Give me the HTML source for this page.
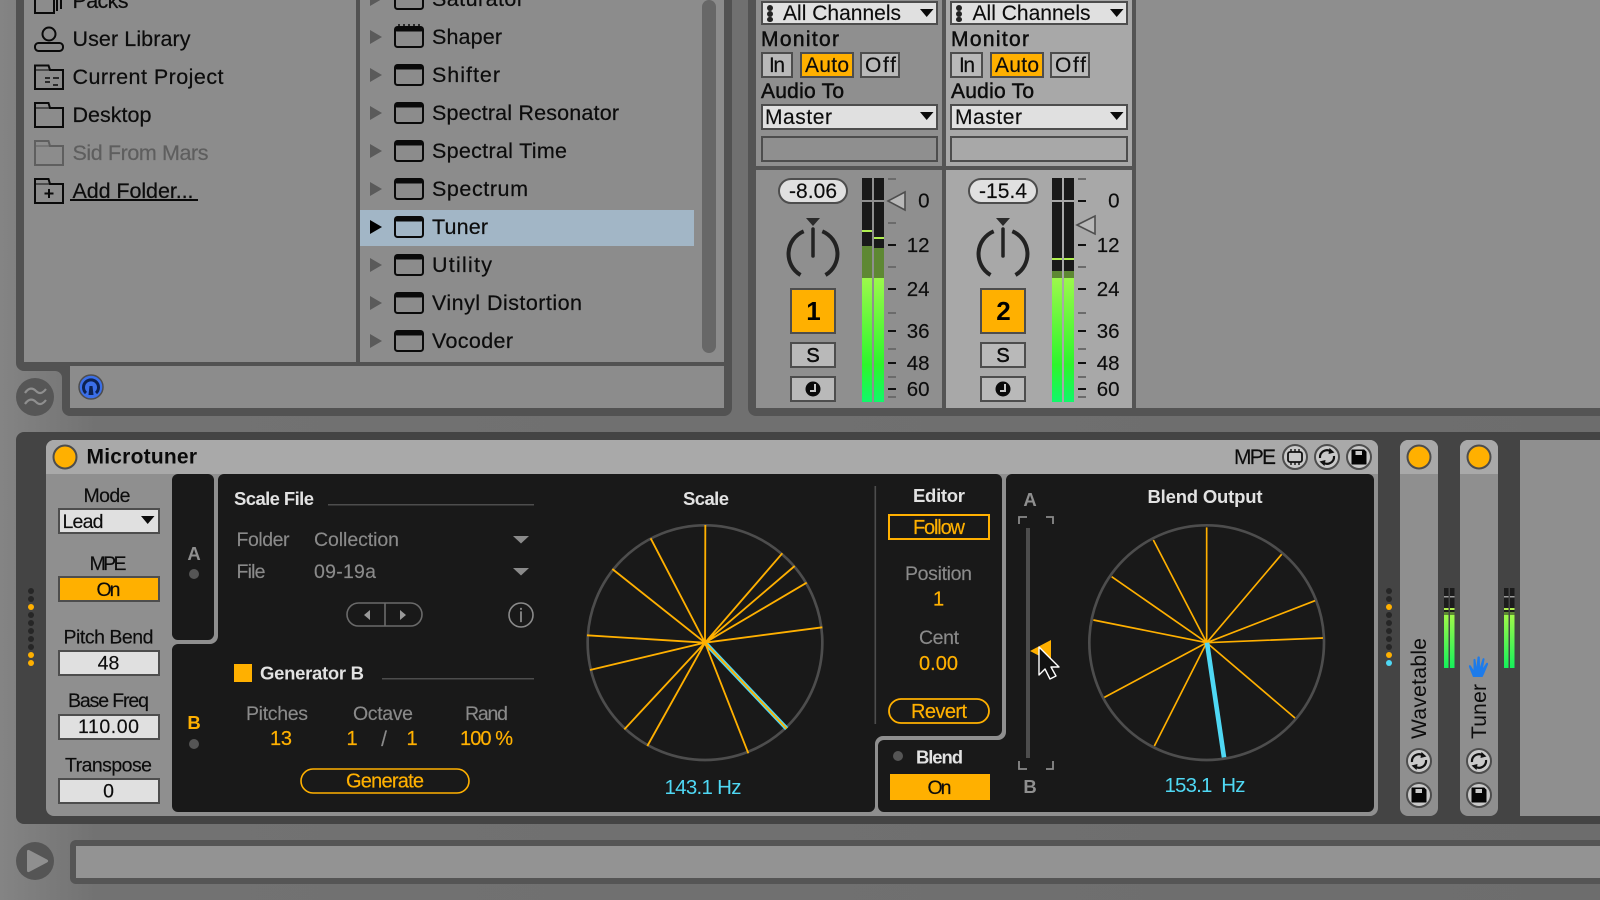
<!DOCTYPE html>
<html><head><meta charset="utf-8">
<style>
html,body{margin:0;padding:0;background:#6f6f6f;overflow:hidden}
svg{display:block;font-family:"Liberation Sans",sans-serif}
.b{font-size:21.5px;fill:#0c0c0c;stroke:#0c0c0c;stroke-width:.2px}
.m{font-size:21px;fill:#0c0c0c;stroke:#0c0c0c;stroke-width:.45px}
.n{font-size:21px;fill:#0c0c0c;stroke:#0c0c0c;stroke-width:.15px}
.s{font-size:19.5px;fill:#0c0c0c;stroke:#0c0c0c;stroke-width:.15px}
.g{font-size:19.5px;fill:#8a8a8a;stroke:#8a8a8a;stroke-width:.15px}
.o{font-size:20px;fill:#ffb000;stroke:#ffb000;stroke-width:.2px}
.t{font-size:18.5px;fill:#e2e2e2;font-weight:bold}
.c{font-size:20.5px;fill:#4fd8f4}
.mid{text-anchor:middle}
</style></head><body>
<svg width="1600" height="900" viewBox="0 0 1600 900" xmlns="http://www.w3.org/2000/svg">
<defs>
<linearGradient id="bg" x1="0" x2="1" y1="0" y2="0"><stop offset="0" stop-color="#848484"/><stop offset=".06" stop-color="#727272"/><stop offset="1" stop-color="#6d6d6d"/></linearGradient>
<linearGradient id="gm" x1="0" x2="0" y1="0" y2="1"><stop offset="0" stop-color="#9cf84c"/><stop offset=".7" stop-color="#2df52c"/><stop offset="1" stop-color="#12f76a"/></linearGradient>
<linearGradient id="gs" x1="0" x2="0" y1="0" y2="1"><stop offset="0" stop-color="#a0f84a"/><stop offset="1" stop-color="#14f05a"/></linearGradient>
<g id="dev"><rect x="-14" y="-10" width="28" height="20" rx="2.5" fill="none" stroke="#0a0a0a" stroke-width="2"/><rect x="-14" y="-10" width="28" height="4.5" rx="2" fill="#0a0a0a"/></g>
<g id="knob"><path d="M806 218H820L813 226Z" fill="#2a2a2a"/><path d="M800.5 275A24.5 24.5 0 0 1 803.7 231.3M822.3 231.3A24.5 24.5 0 0 1 825.5 275" fill="none" stroke="#222" stroke-width="4"/><path d="M813 229V256" stroke="#222" stroke-width="3.5" stroke-linecap="round"/></g>
<g id="sv"><circle r="12" fill="#c9c9c9" stroke="#4d4d4d" stroke-width="2"/><path d="M-7 -7H5L7 -5V7H-7Z" fill="#050505" stroke="#050505" stroke-linejoin="round"/><rect x="-3.5" y="-6" width="6.500" height="4" fill="#c9c9c9"/></g>
<g id="rf"><circle r="12" fill="#c9c9c9" stroke="#4d4d4d" stroke-width="2"/><path d="M-7 1A7 7 0 0 1 4 -5.500M7 -1A7 7 0 0 1 -4 5.500" fill="none" stroke="#111" stroke-width="2.2"/><path d="M2.500 -9L7.500 -4.500L1.500 -3ZM-2.500 9L-7.500 4.500L-1.500 3Z" fill="#111"/></g>
<g id="led"><circle r="11.500" fill="#ffb000" stroke="#4d4d4d" stroke-width="2"/></g>
<path id="tri" d="M0 0L12 7L0 14Z"/>
<g id="ar"><path d="M0 0H13.500L6.700 8Z" fill="#0a0a0a"/></g>
</defs>

<rect width="1600" height="900" fill="url(#bg)"/>

<!-- browser frame -->
<path d="M16 0H732V408a8 8 0 0 1-8 8H70a8 8 0 0 1-8-8V378a7 7 0 0 0-7-7H24a8 8 0 0 1-8-8Z" fill="#525252"/>
<rect x="24" y="0" width="332" height="362" fill="#8c8c8c"/>
<rect x="360" y="0" width="364" height="362" fill="#8c8c8c"/>
<rect x="702" y="0" width="14" height="353" rx="7" fill="#676767"/>
<rect x="70" y="366" width="654" height="42" fill="#8c8c8c"/>
<rect x="360" y="210" width="334" height="36" fill="#a2b6c6"/>

<!-- left sidebar icons -->
<g fill="none" stroke="#0a0a0a" stroke-width="2">
<path d="M35 -6V13H54V-6M57 -6V11M61 -6V9"/>
<circle cx="49" cy="34" r="6.500"/><rect x="35" y="43" width="28" height="8" rx="3.500"/>
<path d="M35 89V65.500H48.500L50 70H63V89Z"/><path d="M35 70H50" stroke-width="1"/>
<path d="M45 78H50M45 82H50M53 78H59M53 85H58" stroke-width="1.600"/>
<path d="M35 127V103H48.500L50 108H63V127Z"/><path d="M35 108H50" stroke-width="1"/>
<g stroke="#5f5f5f"><path d="M35 165V141H48.500L50 146H63V165Z"/><path d="M35 146H50" stroke-width="1"/></g>
<path d="M35 203V179H48.500L50 184H63V203Z"/><path d="M35 184H50" stroke-width="1"/>
<path d="M49 189V198M44.500 193.500H53.500"/>
</g>
<text x="72.500" y="8" class="b" textLength="56">Packs</text>
<text x="72.500" y="46" class="b" textLength="118">User Library</text>
<text x="72.500" y="84" class="b" textLength="151">Current Project</text>
<text x="72.500" y="122" class="b" textLength="79">Desktop</text>
<text x="72.500" y="160" class="b" textLength="136" style="fill:#5e5e5e;stroke:#5e5e5e">Sid From Mars</text>
<text x="72.500" y="198" class="b" textLength="121">Add Folder...</text>
<rect x="70" y="199" width="128" height="2" fill="#0a0a0a"/>

<!-- device list -->
<g fill="#5a5a5a">
<use href="#tri" x="370" y="-8"/><use href="#tri" x="370" y="30"/><use href="#tri" x="370" y="68"/><use href="#tri" x="370" y="106"/><use href="#tri" x="370" y="144"/><use href="#tri" x="370" y="182"/><use href="#tri" x="370" y="258"/><use href="#tri" x="370" y="296"/><use href="#tri" x="370" y="334"/>
</g>
<use href="#tri" x="370" y="220" fill="#000"/>
<use href="#dev" x="409" y="-1"/><use href="#dev" x="409" y="37"/><use href="#dev" x="409" y="75"/><use href="#dev" x="409" y="113"/><use href="#dev" x="409" y="151"/><use href="#dev" x="409" y="189"/><use href="#dev" x="409" y="227"/><use href="#dev" x="409" y="265"/><use href="#dev" x="409" y="303"/><use href="#dev" x="409" y="341"/>
<path d="M399 24V29M404 24V29M409 24V29M414 24V29M419 24V29" stroke="#0a0a0a" stroke-width="1.500"/>
<text x="432" y="6" class="b" textLength="92">Saturator</text>
<text x="432" y="44" class="b" textLength="70">Shaper</text>
<text x="432" y="82" class="b" textLength="68">Shifter</text>
<text x="432" y="120" class="b" textLength="187">Spectral Resonator</text>
<text x="432" y="158" class="b" textLength="135">Spectral Time</text>
<text x="432" y="196" class="b" textLength="96">Spectrum</text>
<text x="432" y="234" class="b" textLength="56">Tuner</text>
<text x="432" y="272" class="b" textLength="60">Utility</text>
<text x="432" y="310" class="b" textLength="150">Vinyl Distortion</text>
<text x="432" y="348" class="b" textLength="81">Vocoder</text>

<!-- browser bottom chips -->
<circle cx="35" cy="397" r="19" fill="#565656"/>
<path d="M25 393C29 387 33 388 36 391S42 394 46 389M25 404C29 398 33 399 36 402S42 405 46 400" fill="none" stroke="#8f8f8f" stroke-width="2.200"/>
<circle cx="91" cy="387" r="12" fill="#3b6fe8" stroke="#4d4d4d" stroke-width="1.500"/>
<path d="M86 393A7.500 7.500 0 1 1 96 393" fill="none" stroke="#0d2250" stroke-width="3"/><path d="M89.500 386H92.500L93.500 395H88.500Z" fill="#0d2250"/>

<!-- mixer -->
<path d="M748 0H1600V416H756a8 8 0 0 1-8-8Z" fill="#545454"/>
<rect x="1136" y="0" width="464" height="408" fill="#8e8e8e"/>
<rect x="756" y="0" width="186" height="166" fill="#8f8f8f"/><rect x="756" y="170" width="186" height="238" fill="#8f8f8f"/>
<rect x="946" y="0" width="186" height="166" fill="#a8a8a8"/><rect x="946" y="170" width="186" height="238" fill="#a8a8a8"/>

<g stroke="#4d4d4d" stroke-width="2">
<rect x="762" y="2" width="175" height="22" fill="#e0e0e0"/><rect x="951" y="2" width="176" height="22" fill="#e0e0e0"/>
<rect x="762" y="53" width="30" height="24" fill="#b9b9b9"/><rect x="801" y="53" width="52" height="24" fill="#ffb000"/><rect x="861" y="53" width="38" height="24" fill="#b9b9b9"/>
<rect x="951" y="53" width="31" height="24" fill="#b9b9b9"/><rect x="991" y="53" width="52" height="24" fill="#ffb000"/><rect x="1051" y="53" width="38" height="24" fill="#b9b9b9"/>
<rect x="762" y="105" width="175" height="24" fill="#e0e0e0"/><rect x="951" y="105" width="176" height="24" fill="#e0e0e0"/>
<rect x="762" y="137" width="175" height="24" fill="#8f8f8f"/><rect x="951" y="137" width="176" height="24" fill="#a8a8a8"/>
<rect x="779" y="179" width="68" height="24" rx="12" fill="#e0e0e0"/><rect x="969" y="179" width="68" height="24" rx="12" fill="#e0e0e0"/>
<rect x="791" y="289" width="44" height="44" fill="#ffb000"/><rect x="981" y="289" width="44" height="44" fill="#ffb000"/>
<rect x="791" y="343" width="44" height="24" fill="#b9b9b9"/><rect x="981" y="343" width="44" height="24" fill="#b9b9b9"/>
<rect x="791" y="377" width="44" height="24" fill="#b9b9b9"/><rect x="981" y="377" width="44" height="24" fill="#b9b9b9"/>
</g>
<g fill="#222"><rect x="767" y="5" width="6" height="6" rx="3"/><rect x="767" y="11" width="6" height="6" rx="3"/><rect x="767" y="17" width="6" height="5" rx="2.500"/>
<rect x="956" y="5" width="6" height="6" rx="3"/><rect x="956" y="11" width="6" height="6" rx="3"/><rect x="956" y="17" width="6" height="5" rx="2.500"/></g>
<use href="#ar" x="920" y="9"/><use href="#ar" x="1110" y="9"/><use href="#ar" x="920" y="112"/><use href="#ar" x="1110" y="112"/>
<text x="783" y="20" class="n" textLength="118">All Channels</text><text x="972.500" y="20" class="n" textLength="118">All Channels</text>
<text x="761" y="46" class="m" textLength="78">Monitor</text><text x="951" y="46" class="m" textLength="78">Monitor</text>
<text x="769" y="72" class="n" textLength="16">In</text><text x="805" y="72" class="n" textLength="44">Auto</text><text x="865" y="72" class="n" textLength="31">Off</text>
<text x="959" y="72" class="n" textLength="16">In</text><text x="995" y="72" class="n" textLength="44">Auto</text><text x="1055" y="72" class="n" textLength="31">Off</text>
<text x="761" y="98" class="m" textLength="83">Audio To</text><text x="951" y="98" class="m" textLength="83">Audio To</text>
<text x="765" y="124" class="n" textLength="67">Master</text><text x="955" y="124" class="n" textLength="67">Master</text>
<text x="789" y="198" class="n" textLength="48">-8.06</text><text x="979" y="198" class="n" textLength="48">-15.4</text>

<use href="#knob"/><use href="#knob" x="190"/>
<text x="813.500" y="320" class="mid" font-size="26" font-weight="bold">1</text><text x="1003.500" y="320" class="mid" font-size="26" font-weight="bold">2</text>
<text x="813" y="362" class="s mid" style="stroke-width:.5px;font-size:20px">S</text><text x="1003" y="362" class="s mid" style="stroke-width:.5px;font-size:20px">S</text>
<circle cx="813" cy="389" r="7.500" fill="#0a0a0a"/><path d="M815 384V391H810" stroke="#c9c9c9" stroke-width="2" fill="none"/>
<circle cx="1003" cy="389" r="7.500" fill="#0a0a0a"/><path d="M1005 384V391H1000" stroke="#c9c9c9" stroke-width="2" fill="none"/>

<!-- meters -->
<g fill="#191919"><rect x="862" y="178" width="10" height="224"/><rect x="874" y="178" width="10" height="224"/><rect x="1052" y="178" width="10" height="224"/><rect x="1064" y="178" width="10" height="224"/></g>
<g fill="#8f8f8f"><rect x="862" y="200" width="22" height="2"/><rect x="872" y="178" width="2" height="224"/></g>
<g fill="#a8a8a8"><rect x="1052" y="200" width="22" height="2"/><rect x="1062" y="178" width="2" height="224"/></g>
<rect x="862" y="246" width="10" height="32" fill="#5e8833"/><rect x="874" y="248" width="10" height="30" fill="#5e8833"/>
<rect x="1052" y="271" width="10" height="7" fill="#5e8833"/><rect x="1064" y="271" width="10" height="7" fill="#5e8833"/>
<g fill="url(#gm)"><rect x="862" y="278" width="10" height="124"/><rect x="874" y="278" width="10" height="124"/><rect x="1052" y="278" width="10" height="124"/><rect x="1064" y="278" width="10" height="124"/></g>
<g fill="#b0f050"><rect x="862" y="230" width="10" height="2"/><rect x="874" y="237" width="10" height="2"/><rect x="1052" y="258" width="10" height="2"/><rect x="1064" y="258" width="10" height="2"/></g>
<g fill="#6b6b6b"><rect x="888" y="178" width="8" height="2"/><rect x="888" y="222" width="8" height="2"/><rect x="888" y="266" width="8" height="2"/><rect x="888" y="312" width="8" height="2"/><rect x="888" y="348" width="8" height="2"/><rect x="888" y="376" width="8" height="2"/><rect x="888" y="396" width="8" height="2"/>
<rect x="1078" y="178" width="8" height="2"/><rect x="1078" y="266" width="8" height="2"/><rect x="1078" y="312" width="8" height="2"/><rect x="1078" y="348" width="8" height="2"/><rect x="1078" y="376" width="8" height="2"/><rect x="1078" y="396" width="8" height="2"/></g>
<g fill="#111"><rect x="888" y="244" width="8" height="2"/><rect x="888" y="288" width="8" height="2"/><rect x="888" y="330" width="8" height="2"/><rect x="888" y="362" width="8" height="2"/><rect x="888" y="388" width="8" height="2"/>
<rect x="1078" y="200" width="8" height="2"/><rect x="1078" y="244" width="8" height="2"/><rect x="1078" y="288" width="8" height="2"/><rect x="1078" y="330" width="8" height="2"/><rect x="1078" y="362" width="8" height="2"/><rect x="1078" y="388" width="8" height="2"/></g>
<path d="M888 201L905 192V210Z" fill="#b8b8b8" stroke="#4d4d4d" stroke-width="1.600"/>
<path d="M1077 225L1095 216V234Z" fill="#b8b8b8" stroke="#4d4d4d" stroke-width="1.600"/>
<g text-anchor="end" font-size="20.500" fill="#0c0c0c" stroke="#0c0c0c" stroke-width=".15">
<text x="929.500" y="207.500">0</text><text x="929.500" y="252">12</text><text x="929.500" y="296">24</text><text x="929.500" y="338">36</text><text x="929.500" y="370">48</text><text x="929.500" y="396">60</text>
<text x="1119.500" y="207.500">0</text><text x="1119.500" y="252">12</text><text x="1119.500" y="296">24</text><text x="1119.500" y="338">36</text><text x="1119.500" y="370">48</text><text x="1119.500" y="396">60</text>
</g>

<!-- device rack -->
<path d="M24 432H1600V824H24a8 8 0 0 1-8-8V440a8 8 0 0 1 8-8Z" fill="#444"/>
<rect x="46" y="440" width="1332" height="376" rx="8" fill="#8f8f8f"/>
<path d="M46 474V448a8 8 0 0 1 8-8H1370a8 8 0 0 1 8 8V474Z" fill="#a9a9a9"/>
<use href="#led" x="65" y="457"/>
<text x="86.500" y="463.500" textLength="110.500" font-size="21" font-weight="bold" fill="#0a0a0a">Microtuner</text>
<text x="1234" y="464" class="n" textLength="42">MPE</text>
<g transform="translate(1295 457)"><circle r="12" fill="#c9c9c9" stroke="#4d4d4d" stroke-width="2"/><rect x="-7" y="-5" width="14" height="10" rx="2" fill="none" stroke="#111" stroke-width="1.800"/><path d="M-4 -8V-5M0 -8V-5M4 -8V-5M-4 5V8M0 5V8M4 5V8" stroke="#111" stroke-width="1.400"/></g>
<use href="#rf" x="1327" y="457"/>
<use href="#sv" x="1359" y="457"/>

<!-- left controls -->
<g stroke="#4d4d4d" stroke-width="2">
<rect x="59" y="509" width="100" height="24" fill="#e0e0e0"/>
<rect x="59" y="577" width="100" height="24" fill="#ffb000"/>
<rect x="59" y="651" width="100" height="24" fill="#e0e0e0"/>
<rect x="59" y="715" width="100" height="24" fill="#e0e0e0"/>
<rect x="59" y="779" width="100" height="24" fill="#e0e0e0"/>
</g>
<use href="#ar" x="141" y="516"/>
<text x="83.500" y="502" class="s" textLength="47">Mode</text>
<text x="62.500" y="528" class="s" textLength="41">Lead</text>
<text x="89.500" y="570" class="s" textLength="37">MPE</text>
<text x="96.500" y="596" class="s" textLength="24">On</text>
<text x="63.500" y="643.500" class="s" textLength="90">Pitch Bend</text>
<text x="108.500" y="669.500" class="s mid">48</text>
<text x="68" y="707" class="s" textLength="81">Base Freq</text>
<text x="78" y="733" class="s" textLength="61">110.00</text>
<text x="65" y="771.500" class="s" textLength="87">Transpose</text>
<text x="108.500" y="797.500" class="s mid">0</text>
<!-- dots -->
<g fill="#262626"><circle cx="31" cy="591" r="3"/><circle cx="31" cy="599" r="3"/><circle cx="31" cy="615" r="3"/><circle cx="31" cy="623" r="3"/><circle cx="31" cy="631" r="3"/><circle cx="31" cy="639" r="3"/><circle cx="31" cy="647" r="3"/>
<circle cx="1389" cy="591" r="3"/><circle cx="1389" cy="599" r="3"/><circle cx="1389" cy="615" r="3"/><circle cx="1389" cy="623" r="3"/><circle cx="1389" cy="631" r="3"/><circle cx="1389" cy="639" r="3"/><circle cx="1389" cy="647" r="3"/></g>
<g fill="#ffb000"><circle cx="31" cy="607" r="3"/><circle cx="31" cy="655" r="3"/><circle cx="31" cy="663" r="3"/><circle cx="1389" cy="607" r="3"/><circle cx="1389" cy="655" r="3"/></g>
<circle cx="1389" cy="663" r="3" fill="#4fd8f4"/>

<!-- dark panel -->
<rect x="172" y="474" width="1202" height="338" rx="6" fill="#191919"/>
<g fill="#8f8f8f">
<path d="M214 474H218V636a8 8 0 0 1-8 8H172V640H208a6 6 0 0 0 6-6Z"/>
<path d="M1002 474H1006V732a8 8 0 0 1-8 8H884a6 6 0 0 0-6 6V812H875V744a8 8 0 0 1 8-8H996a6 6 0 0 0 6-6Z"/>
<!-- rounded inner corners -->
<path d="M214 474V480A6 6 0 0 0 208 474ZM218 474V480A6 6 0 0 1 224 474ZM172 640H178A6 6 0 0 1 172 634ZM172 644H178A6 6 0 0 0 172 650ZM1002 474V480A6 6 0 0 0 996 474ZM1006 474V480A6 6 0 0 1 1012 474ZM875 812V806A6 6 0 0 1 869 812ZM878 812V806A6 6 0 0 0 884 812Z"/>
</g>

<text x="194" y="560" class="mid" font-size="18.500" font-weight="bold" fill="#8f8f8f">A</text>
<circle cx="194" cy="574" r="5" fill="#555"/>
<text x="194" y="729" class="mid" font-size="18.500" font-weight="bold" fill="#ffb000">B</text>
<circle cx="194" cy="744" r="5" fill="#555"/>

<!-- scale file -->
<text x="234" y="505" class="t" textLength="80">Scale File</text>
<rect x="328" y="504" width="206" height="1.500" fill="#4d4d4d"/>
<text x="236.500" y="546" class="g" textLength="53">Folder</text>
<text x="314" y="546" class="g" textLength="85">Collection</text>
<path d="M513 536H529L521 543.500Z" fill="#8a8a8a"/>
<text x="236.500" y="578" class="g" textLength="29">File</text>
<text x="314" y="578" class="g" textLength="62">09-19a</text>
<path d="M513 568H529L521 575.500Z" fill="#8a8a8a"/>
<rect x="347" y="603" width="75" height="23" rx="11.500" fill="none" stroke="#6a6a6a" stroke-width="1.600"/>
<path d="M385 603V626" stroke="#6a6a6a" stroke-width="1.600"/>
<path d="M370 610V620L364 615ZM400 610V620L406 615Z" fill="#9a9a9a"/>
<circle cx="521" cy="615" r="12" fill="none" stroke="#8a8a8a" stroke-width="1.600"/>
<text x="521" y="622" class="g mid" style="font-size:19px">i</text>
<rect x="234" y="664" width="18" height="18" fill="#ffb000"/>
<text x="260" y="679.500" class="t" textLength="104">Generator B</text>
<rect x="382" y="678" width="152" height="1.500" fill="#4d4d4d"/>
<text x="246" y="720" class="g" textLength="62">Pitches</text>
<text x="353" y="720" class="g" textLength="60">Octave</text>
<text x="465" y="720" class="g" textLength="43">Rand</text>
<text x="270" y="745" class="o" textLength="22">13</text>
<text x="352" y="745" class="o mid">1</text>
<text x="384" y="746" class="g mid" style="font-size:21px">/</text>
<text x="412" y="745" class="o mid">1</text>
<text x="460" y="745" class="o" textLength="53">100 %</text>
<rect x="301" y="769" width="168" height="24" rx="12" fill="none" stroke="#ffb000" stroke-width="1.600"/>
<text x="346" y="787.500" class="o" textLength="78">Generate</text>

<!-- Scale circle -->
<text x="683" y="505" class="t" textLength="46">Scale</text>
<g transform="translate(560 470) scale(.33333)">
<circle cx="435" cy="518" r="352" fill="none" stroke="#4d4d4d" stroke-width="8"/>
<path d="M435 518L680 776" stroke="#4fd8f4" stroke-width="13"/>
<path d="M435 518L436 165M435 518L272 205M435 518L157 297M435 518L81 496M435 518L90 600M435 518L193 778M435 518L262 828M435 518L565 850M435 518L680 776M435 518L787 472M435 518L740 338M435 518L704 288M435 518L667 250" stroke="#ffb000" stroke-width="5.500" fill="none"/>
</g>
<text x="664.500" y="794" class="c" textLength="77">143.1 Hz</text>

<!-- editor -->
<rect x="874.500" y="486" width="1.600" height="238" fill="#4d4d4d"/>
<text x="913" y="502" class="t" textLength="52">Editor</text>
<rect x="889" y="515" width="100" height="24" fill="none" stroke="#ffb000" stroke-width="2"/>
<text x="913" y="534" class="o" textLength="52">Follow</text>
<text x="905" y="580" class="g" textLength="67">Position</text>
<text x="938.500" y="605.500" class="o mid">1</text>
<text x="919" y="644" class="g" textLength="40">Cent</text>
<text x="919" y="670" class="o" textLength="39">0.00</text>
<rect x="889" y="699" width="100" height="24" rx="12" fill="none" stroke="#ffb000" stroke-width="1.800"/>
<text x="911" y="718" class="o" textLength="56">Revert</text>
<circle cx="898" cy="756" r="5" fill="#555"/>
<text x="916" y="763.500" class="t" textLength="47">Blend</text>
<rect x="890" y="774" width="100" height="26" fill="#ffb000"/>
<text x="927.500" y="794" class="s" textLength="24">On</text>

<!-- blend slider -->
<text x="1030" y="506" class="mid" font-size="18.500" font-weight="bold" fill="#8f8f8f">A</text>
<text x="1030" y="793" class="mid" font-size="18.500" font-weight="bold" fill="#8f8f8f">B</text>
<path d="M1019 524V517H1027M1046 517H1053V524M1019 761V769H1027M1046 769H1053V761" fill="none" stroke="#8a8a8a" stroke-width="1.800"/>
<rect x="1026" y="528" width="4" height="230" fill="#4d4d4d"/>
<path d="M1030 651L1051 640V662Z" fill="#ffb000"/>
<path d="M1039 647V675L1045 669L1050 679L1056 676L1051 667H1059Z" fill="#111" stroke="#fff" stroke-width="1.400" stroke-linejoin="round"/>

<!-- Blend output -->
<text x="1147.500" y="503" class="t" textLength="115">Blend Output</text>
<g transform="translate(1000 470) scale(.33333)">
<circle cx="620" cy="518" r="352" fill="none" stroke="#4d4d4d" stroke-width="8"/>
<path d="M620 518L620 172M620 518L460 210M620 518L335 320M620 518L280 450M620 518L313 682M620 518L463 828M620 518L885 744M620 518L969 504M620 518L945 392M620 518L845 253" stroke="#ffb000" stroke-width="5" fill="none"/>
<path d="M621 518L672 862" stroke="#4fd8f4" stroke-width="14" fill="none"/>
</g>
<text x="1164.500" y="792" class="c" textLength="81" xml:space="preserve">153.1  Hz</text>

<!-- collapsed devices -->
<rect x="1400" y="440" width="38" height="376" rx="8" fill="#8f8f8f"/>
<path d="M1400 474V448a8 8 0 0 1 8-8H1430a8 8 0 0 1 8 8V474Z" fill="#a9a9a9"/>
<use href="#led" x="1419" y="457"/>
<text transform="translate(1426 739) rotate(-90)" font-size="21" fill="#0c0c0c" textLength="101">Wavetable</text>
<use href="#rf" x="1419" y="761"/><use href="#sv" x="1419" y="795"/>

<rect x="1460" y="440" width="38" height="376" rx="8" fill="#8f8f8f"/>
<path d="M1460 474V448a8 8 0 0 1 8-8H1490a8 8 0 0 1 8 8V474Z" fill="#a9a9a9"/>
<use href="#led" x="1479" y="457"/>
<text transform="translate(1486 739) rotate(-90)" font-size="21" fill="#0c0c0c" textLength="55">Tuner</text>
<use href="#rf" x="1479" y="761"/><use href="#sv" x="1479" y="795"/>
<path d="M1473 677L1469 667C1468.500 665 1470 664.500 1471 666L1473.500 670L1473.500 660C1473.500 658.500 1475.500 658.500 1475.500 660L1476.500 667L1477.500 657.500C1477.500 656 1479.800 656 1479.800 657.500L1480 667L1482.500 659C1483 657.500 1484.800 658 1484.500 659.500L1483 668L1486 663.500C1487 662 1488.500 663 1488 664.500L1484 674L1482.500 677Z" fill="#1d7bea"/>

<!-- mini meters -->
<g fill="#1c1c1c"><rect x="1444" y="588" width="4.500" height="80"/><rect x="1450" y="588" width="4.500" height="80"/><rect x="1504" y="588" width="4.500" height="80"/><rect x="1510" y="588" width="4.500" height="80"/></g>
<g fill="#9a9a9a"><rect x="1444" y="596" width="4.500" height="1.500"/><rect x="1450" y="596" width="4.500" height="1.500"/><rect x="1504" y="596" width="4.500" height="1.500"/><rect x="1510" y="596" width="4.500" height="1.500"/></g>
<g fill="#b0f050"><rect x="1444" y="608" width="4.500" height="2"/><rect x="1450" y="608" width="4.500" height="2"/><rect x="1504" y="608" width="4.500" height="2"/><rect x="1510" y="608" width="4.500" height="2"/></g>
<g fill="#5e8833"><rect x="1444" y="612" width="4.500" height="4"/><rect x="1450" y="612" width="4.500" height="4"/><rect x="1504" y="612" width="4.500" height="4"/><rect x="1510" y="612" width="4.500" height="4"/></g>
<g fill="url(#gs)"><rect x="1444" y="615" width="4.500" height="53"/><rect x="1450" y="615" width="4.500" height="53"/><rect x="1504" y="615" width="4.500" height="53"/><rect x="1510" y="615" width="4.500" height="53"/></g>

<rect x="1520" y="440" width="80" height="376" fill="#8f8f8f"/>

<!-- transport -->
<circle cx="35" cy="861" r="19" fill="#555"/>
<path d="M27 851.500C27 850 28 849.500 29.500 850.200L47 859.500C48.500 860.300 48.500 861.700 47 862.500L29.500 871.800C28 872.500 27 872 27 870.500Z" fill="#8f8f8f"/>
<path d="M1600 840H76a6 6 0 0 0-6 6V878a6 6 0 0 0 6 6H1600Z" fill="#555"/>
<rect x="76" y="846" width="1524" height="32" fill="#939393"/>
</svg>
</body></html>
